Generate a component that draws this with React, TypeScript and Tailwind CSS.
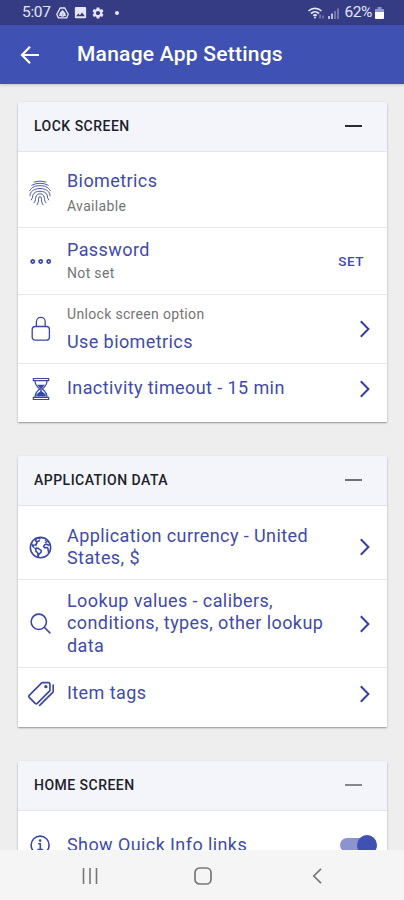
import type { ReactNode } from "react";
import {
  IoEarthOutline,
  IoInformationCircleOutline,
  IoPricetagsOutline,
  IoSearchOutline,
} from "react-icons/io5";
import { MdImage, MdSettings } from "react-icons/md";

function Chevron() {
  return (
    <svg className="mr-4 h-5 w-3 shrink-0" viewBox="0 0 12 20" fill="none" stroke="#343dab" strokeWidth="2">
      <path d="M1.8 2.2 9.4 10 1.8 17.8" />
    </svg>
  );
}

function FingerprintIcon() {
  return (
    <svg className="-ml-px" width="22" height="26" viewBox="0 0 22 26" fill="none" stroke="currentColor" strokeWidth="0.9" strokeLinecap="round">
      <path d="M5 2q6-2 12 0M2.800 5.200q8.200-4 16.400 0" />
      <path d="M.8 10.500C3 6.500 7 5.700 11 5.700s8 .8 10.200 4.800" />
      <path d="M1 15.800C.8 11.500 5 8.500 11 8.500s10.200 3 10 7.300" />
      <path d="M2.200 20c1.600-1.800 1.200-3.600 1.800-5.200 1-2.400 3.700-3.600 7-3.600s6 1.200 7 3.600c.6 1.600.2 3.400 1.800 5.200" />
      <path d="M5 22.800c2.200-2.300 1.300-4 1.800-5.800.5-2 2.100-3.100 4.200-3.100s3.700 1.100 4.200 3.100c.5 1.800-.4 3.500 1.800 5.800" />
      <path d="M8 24.800c2-2.800 1.500-4.800 1.600-6.800.1-1.800 2.700-1.800 2.800 0 .1 2-.4 4 1.600 6.800" />
    </svg>
  );
}

function LockIcon() {
  return (
    <svg width="22" height="26" viewBox="0 0 22 26" fill="none" stroke="currentColor" strokeWidth="1.3">
      <rect x="2.2" y="10.500" width="17.200" height="13.700" rx="3" />
      <path d="M6.400 10.500V5.800a4.400 4.400 0 0 1 8.800 0v4.700" />
    </svg>
  );
}

function HourglassIcon() {
  return (
    <svg width="20" height="24" viewBox="0 0 20 24" fill="none" stroke="currentColor" strokeWidth="1.2" strokeLinejoin="round">
      <path d="M2.300 1.500h15.400v2.200H2.300zM2.300 20.300h15.400v2.200H2.300z" />
      <path d="M4 3.800c0 4 1.500 5.700 4.700 8.200C5.500 14.500 4 16.200 4 20.200M16 3.800c0 4-1.500 5.700-4.700 8.200C14.500 14.500 16 16.200 16 20.200" />
      <path d="M6 7.800h8L10.700 11.500v2.700l4 3.300v2H5.300v-2l4-3.300v-2.700z" fill="currentColor" stroke="none" />
    </svg>
  );
}

function DotsIcon() {
  return (
    <svg width="24" height="8" viewBox="0 0 24 8" fill="none" stroke="currentColor" strokeWidth="1.7">
      <circle cx="3.800" cy="4.500" r="1.600" />
      <circle cx="11.700" cy="4.500" r="1.600" />
      <circle cx="19.700" cy="4.500" r="1.600" />
    </svg>
  );
}

function Card({ title, children, dash }: { title: string; children: ReactNode; dash: string }) {
  return (
    <section className="mr-[17px] ml-[18px] shrink-0 rounded-t-[3px] bg-white shadow-[0_1px_2px_rgba(0,0,0,0.38)]">
      <header className="flex h-[50px] items-center justify-between rounded-t-[3px] border-b border-[#e3e5ea] bg-[#f3f5fa] pr-[25px] pb-px pl-4">
        <h2 className="text-[14px] leading-5 font-medium tracking-[0.48px] text-[#20212a]">{title}</h2>
        <div className={`h-[2px] w-[17px] ${dash}`} />
      </header>
      {children}
    </section>
  );
}

function Row({ icon, height, children, end, last }: { icon: ReactNode; height: string; children: ReactNode; end?: ReactNode; last?: boolean }) {
  return (
    <div className={`flex items-center ${height} ${last ? "" : "border-b border-[#e6e6e8]"}`}>
      <div className="flex w-[45px] shrink-0 justify-center text-[#3a45a8]">{icon}</div>
      <div className="min-w-0 flex-1 pl-1">{children}</div>
      {end}
    </div>
  );
}

const label = "text-[18px] leading-[22.5px] tracking-[0.41px] text-[#3f4aad]";
const note = "text-[14px] leading-[20px] tracking-[0.33px] text-[#747476]";

export default function App() {
  return (
    <div className="flex h-[900px] w-[404px] flex-col overflow-hidden bg-[#eeeeee] font-['Roboto',sans-serif]">
      <div className="flex h-[25px] shrink-0 items-center bg-[#353c83] pl-[22px] text-[#e4e6fa]">
        <span className="w-[34px] text-[15.500px] leading-[25px] tracking-[-0.3px]">5:07</span>
        <svg width="13" height="12" viewBox="0 0 13 12" fill="none" stroke="currentColor" strokeWidth="1.300">
          <path d="M4.300 1h4.400l3.500 6.300-1.500 3.500H2.300L.8 7.300z" />
          <path d="M6.500 3.500 3.500 9M6.500 3.500 9.500 9M3.500 7h6" />
          <circle cx="6.500" cy="7" r="2" />
        </svg>
        <MdImage className="ml-1 size-[15px]" />
        <MdSettings className="ml-[3px] size-[14px]" />
        <i className="ml-[10px] size-1 rounded-full bg-current" />
        <svg className="ml-auto h-[14px] w-[33px]" viewBox="0 0 33 14" fill="none" stroke="currentColor">
          <path d="M1.500 5a9.500 9.500 0 0 1 13 0M4 7.500a6 6 0 0 1 8 0M6.300 9.700a2.800 2.800 0 0 1 3.500 0" strokeWidth="1.700" />
          <circle cx="8" cy="11.500" r="1" fill="currentColor" stroke="none" />
          <path d="M13 12.500v-4M16 12.500v-3" strokeWidth="1" opacity=".6" />
          <path d="M22 13v-3M25 13V7.500" strokeWidth="1.500" />
          <path d="M28 13V5M31 13V2.500" strokeWidth="1.500" opacity=".45" />
        </svg>
        <span className="ml-1 text-[15.500px] leading-[25px] tracking-[-0.4px]">62%</span>
        <svg className="mr-[20px] ml-[3px] h-[12px] w-[9px]" viewBox="0 0 9 12" preserveAspectRatio="none">
          <path d="M2.500 0h4v2h2.500v3H0V2h2.500z" fill="#9297ca" />
          <path d="M0 5h9v6a1 1 0 0 1-1 1H1a1 1 0 0 1-1-1z" fill="white" />
        </svg>
      </div>

      <header className="z-10 flex h-[59px] shrink-0 items-center bg-[#4051b4] text-white shadow-[0_1px_3px_rgba(0,0,0,0.2)]">
        <svg className="ml-5 h-5 w-5" viewBox="0 0 20 20" fill="none" stroke="currentColor" strokeWidth="2.200">
          <path d="M19 10H2.500M10 1.800 2 10l8 8.200" />
        </svg>
        <h1 className="ml-[37px] pt-px text-[21px] font-medium tracking-[0.24px]">Manage App Settings</h1>
      </header>

      <main className="flex min-h-0 flex-1 flex-col gap-[34px] overflow-hidden pt-[18px]">
        <Card title="LOCK SCREEN" dash="bg-[#292a33]">
          <Row height="h-[76px] pt-[7px]" icon={<FingerprintIcon />}>
            <div className={`${label} pb-[3px]`}>Biometrics</div>
            <div className={note}>Available</div>
          </Row>
          <Row height="h-[67px]" icon={<DotsIcon />} end={<span className="mr-[23px] text-[13.500px] font-medium tracking-[0.55px] text-[#3f4aad]">SET</span>}>
            <div className={`${label} pb-[2px]`}>Password</div>
            <div className={note}>Not set</div>
          </Row>
          <Row height="h-[69px]" icon={<LockIcon />} end={<Chevron />}>
            <div className={`${note} pb-[7px]`}>Unlock screen option</div>
            <div className={label}>Use biometrics</div>
          </Row>
          <Row height="h-[58px] pb-[9px]" icon={<HourglassIcon />} end={<Chevron />} last>
            <div className={label}>Inactivity timeout - 15 min</div>
          </Row>
        </Card>

        <Card title="APPLICATION DATA" dash="bg-[#6e7078]">
          <Row height="h-[74px] pt-[9px]" icon={<IoEarthOutline size={25} />} end={<Chevron />}>
            <div className={label}>Application currency - United<br />States, $</div>
          </Row>
          <Row height="h-[88px]" icon={<IoSearchOutline size={25} />} end={<Chevron />}>
            <div className={label}>Lookup values - calibers,<br />conditions, types, other lookup<br />data</div>
          </Row>
          <Row height="h-[59px] pb-2" icon={<IoPricetagsOutline size={26} />} end={<Chevron />} last>
            <div className={label}>Item tags</div>
          </Row>
        </Card>

        <Card title="HOME SCREEN" dash="bg-[#85878d]">
          <Row
            height="h-[68px]"
            icon={<IoInformationCircleOutline size={25} />}
            last
            end={
              <div className="relative mr-[10px] h-5 w-[37px]">
                <div className="mt-[3px] h-[14px] w-[34px] rounded-full bg-[#8c94cf]" />
                <div className="absolute top-0 right-0 size-5 rounded-full bg-[#4051b4]" />
              </div>
            }
          >
            <div className={label}>Show Quick Info links</div>
          </Row>
        </Card>
      </main>

      <nav className="z-10 flex h-[50px] shrink-0 items-center bg-[#f5f5f5] pt-0.5 pl-[82px] text-[#77787a]">
        <svg width="16" height="16" viewBox="0 0 16 16" stroke="currentColor" strokeWidth="1.600">
          <path d="M1.500 0v16M8 0v16M14.500 0v16" />
        </svg>
        <svg className="ml-[96px]" width="18" height="18" viewBox="0 0 18 18" fill="none" stroke="currentColor" strokeWidth="1.700">
          <rect x="1" y="1" width="16" height="16" rx="4.500" />
        </svg>
        <svg className="ml-[100px]" width="10" height="16" viewBox="0 0 10 16" fill="none" stroke="currentColor" strokeWidth="1.700">
          <path d="M9 .8 1.800 8 9 15.200" />
        </svg>
      </nav>
    </div>
  );
}
